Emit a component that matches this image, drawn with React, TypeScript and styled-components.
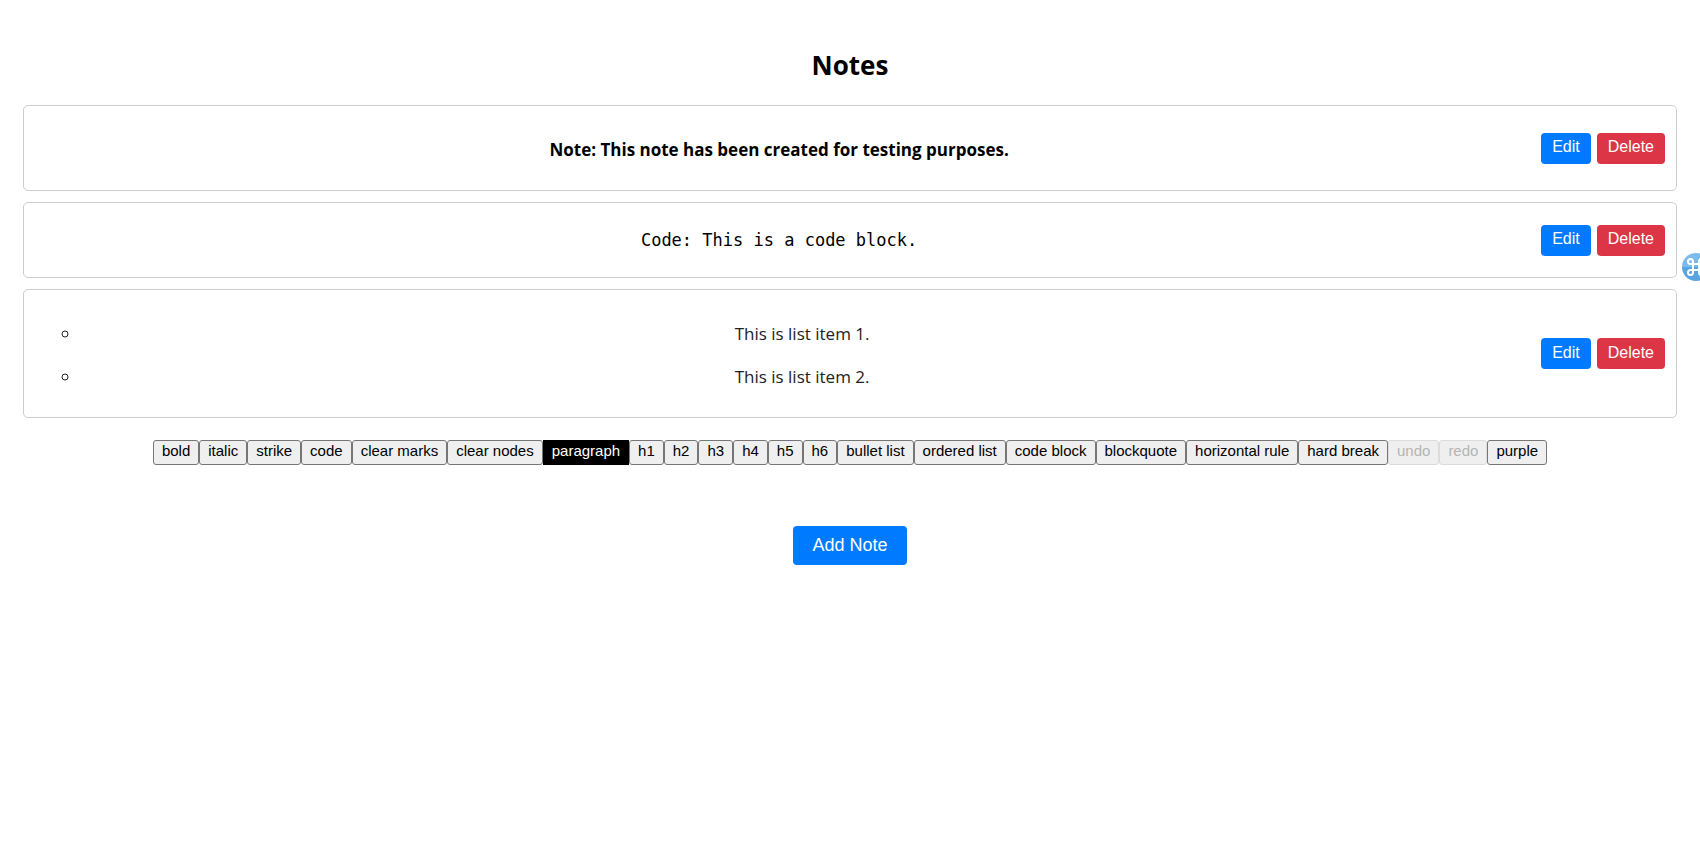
import React from "react";
import styled, { createGlobalStyle } from "styled-components";

const GlobalStyle = createGlobalStyle`
  *, *::before, *::after { box-sizing: border-box; }
  body {
    margin: 0;
    background: #fff;
    color: #000;
    font-family: "Segoe UI", "Open Sans", "Noto Sans", sans-serif;
    font-size: 17px;
    line-height: 24px;
  }
`;

const Page = styled.main`
  padding: 48px 23px;
  text-align: center;
`;

const Title = styled.h1`
  margin: 0 0 23px;
  font-size: 26px;
  line-height: 34px;
  font-weight: 700;
`;

const NoteList = styled.ul`
  display: flex;
  flex-direction: column;
  gap: 11px;
  margin: 0;
  padding: 0;
  list-style: none;
`;

const NoteCard = styled.li`
  display: flex;
  align-items: center;
  gap: 18px;
  padding: 10px 11px;
  border: 1px solid #ccc;
  border-radius: 5px;
`;

const NoteBody = styled.div`
  flex: 1;
  min-width: 0;
`;

const StrongText = styled.p`
  margin: 22px 0 18px;
  font-weight: 700;
`;

const CodeText = styled.pre`
  margin: 15px 0;
  font: 17px/24px Consolas, "DejaVu Sans Mono", monospace;
  code { font: inherit; }
`;

const Bullets = styled.ul`
  margin: 22px 0 18px;
  padding-left: 46px;
  list-style: circle;
`;

const BulletItem = styled.li`
  color: #222;
  & + & { margin-top: 19px; }
`;

const Actions = styled.div`
  display: flex;
  gap: 6px;
`;

const Button = styled.button<{ $tone: "primary" | "danger"; $large?: boolean }>`
  padding: ${(p) => (p.$large ? "0 19px" : "0 11px 2px")};
  height: ${(p) => (p.$large ? 39 : 31)}px;
  border: 0;
  border-radius: 4px;
  background: ${(p) => (p.$tone === "primary" ? "#007bff" : "#dc3545")};
  color: #fff;
  font-family: Arial, "Liberation Sans", sans-serif;
  font-size: ${(p) => (p.$large ? 18 : 16)}px;
  cursor: pointer;
`;

const Toolbar = styled.div`
  display: flex;
  flex-wrap: wrap;
  justify-content: center;
  margin: 22px 0 61px;
`;

const Tool = styled.button<{ $active?: boolean }>`
  height: 25px;
  padding: 0 8px 3px;
  border: 1px solid ${(p) => (p.$active ? "#000" : "#767676")};
  border-radius: ${(p) => (p.$active ? 0 : 3)}px;
  background: ${(p) => (p.$active ? "#000" : "#efefef")};
  color: ${(p) => (p.$active ? "#fff" : "#000")};
  font: 15px/18px Arial, "Liberation Sans", sans-serif;
  &:disabled {
    border-color: #dcdcdc;
    color: #b4b4b4;
  }
`;

const Shortcut = styled.button`
  position: fixed;
  top: 253px;
  right: -10px;
  width: 28px;
  height: 28px;
  padding: 0;
  border: 0;
  border-radius: 50%;
  overflow: hidden;
  background: linear-gradient(#79bbec 50%, #5ba4e2 50%);
  svg { display: block; }
`;

const tools = [
  "bold", "italic", "strike", "code", "clear marks", "clear nodes", "paragraph",
  "h1", "h2", "h3", "h4", "h5", "h6", "bullet list", "ordered list", "code block",
  "blockquote", "horizontal rule", "hard break", "undo", "redo", "purple",
];

const notes = [
  <StrongText>Note: This note has been created for testing purposes.</StrongText>,
  <CodeText><code>Code: This is a code block.</code></CodeText>,
  <Bullets>
    <BulletItem>This is list item 1.</BulletItem>
    <BulletItem>This is list item 2.</BulletItem>
  </Bullets>,
];

export default function App() {
  return (
    <>
      <GlobalStyle />
      <Page>
        <Title>Notes</Title>
        <NoteList>
          {notes.map((note, i) => (
            <NoteCard key={i}>
              <NoteBody>{note}</NoteBody>
              <Actions>
                <Button type="button" $tone="primary">Edit</Button>
                <Button type="button" $tone="danger">Delete</Button>
              </Actions>
            </NoteCard>
          ))}
        </NoteList>
        <Toolbar role="toolbar" aria-label="Formatting">
          {tools.map((name) => (
            <Tool
              key={name}
              type="button"
              $active={name === "paragraph"}
              disabled={name === "undo" || name === "redo"}
            >
              {name}
            </Tool>
          ))}
        </Toolbar>
        <Button type="button" $tone="primary" $large>Add Note</Button>
      </Page>
      <Shortcut type="button" aria-label="Shortcuts">
        <svg width="28" height="28" viewBox="0 0 28 28" fill="none" stroke="#fff" strokeWidth="2">
          <path d="M11 11h6v6h-6zM11 11H8.500a2.500 2.500 0 1 1 2.500-2.500zM17 11V8.500a2.500 2.500 0 1 1 2.500 2.500zM17 17h2.500a2.500 2.500 0 1 1-2.500 2.500zM11 17v2.500a2.500 2.500 0 1 1-2.500-2.500z" />
        </svg>
      </Shortcut>
    </>
  );
}
